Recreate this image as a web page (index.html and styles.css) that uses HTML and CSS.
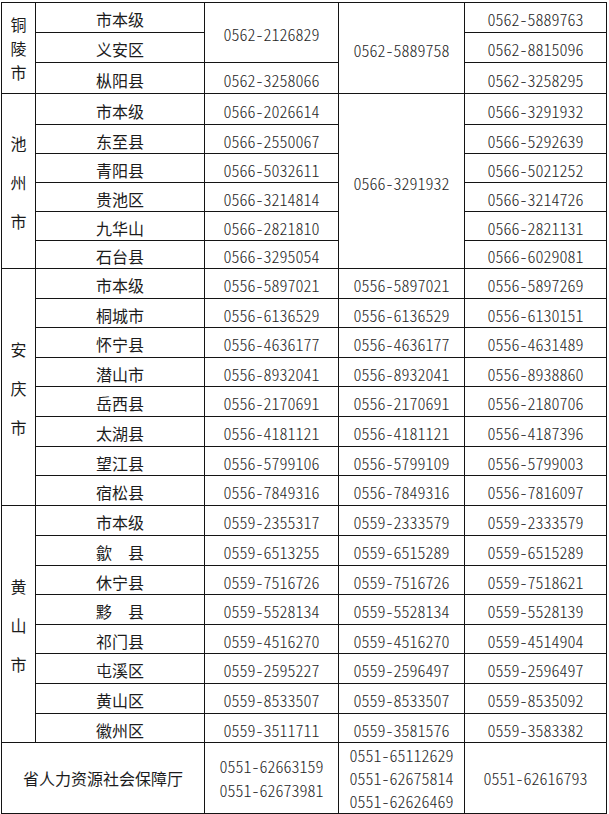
FILE: index.html
```html
<!DOCTYPE html>
<html lang="zh-CN">
<head>
<meta charset="utf-8">
<title>咨询电话</title>
<link rel="stylesheet" href="styles.css">
</head>
<body>
<div class="sheet">
  <!-- 铜陵市 -->
  <div class="c city city-short r3"><span>铜</span><span>陵</span><span>市</span></div>
  <div class="c">市本级</div>
  <div class="c num r2">0562-2126829</div>
  <div class="c num r3">0562-5889758</div>
  <div class="c num">0562-5889763</div>
  <div class="c">义安区</div>
  <div class="c num">0562-8815096</div>
  <div class="c">枞阳县</div>
  <div class="c num">0562-3258066</div>
  <div class="c num">0562-3258295</div>

  <!-- 池州市 -->
  <div class="c city r6"><span>池</span><span>州</span><span>市</span></div>
  <div class="c">市本级</div>
  <div class="c num">0566-2026614</div>
  <div class="c num r6">0566-3291932</div>
  <div class="c num">0566-3291932</div>
  <div class="c">东至县</div>
  <div class="c num">0566-2550067</div>
  <div class="c num">0566-5292639</div>
  <div class="c">青阳县</div>
  <div class="c num">0566-5032611</div>
  <div class="c num">0566-5021252</div>
  <div class="c">贵池区</div>
  <div class="c num">0566-3214814</div>
  <div class="c num">0566-3214726</div>
  <div class="c">九华山</div>
  <div class="c num">0566-2821810</div>
  <div class="c num">0566-2821131</div>
  <div class="c">石台县</div>
  <div class="c num">0566-3295054</div>
  <div class="c num">0566-6029081</div>

  <!-- 安庆市 -->
  <div class="c city r8"><span>安</span><span>庆</span><span>市</span></div>
  <div class="c">市本级</div>
  <div class="c num">0556-5897021</div>
  <div class="c num">0556-5897021</div>
  <div class="c num">0556-5897269</div>
  <div class="c">桐城市</div>
  <div class="c num">0556-6136529</div>
  <div class="c num">0556-6136529</div>
  <div class="c num">0556-6130151</div>
  <div class="c">怀宁县</div>
  <div class="c num">0556-4636177</div>
  <div class="c num">0556-4636177</div>
  <div class="c num">0556-4631489</div>
  <div class="c">潜山市</div>
  <div class="c num">0556-8932041</div>
  <div class="c num">0556-8932041</div>
  <div class="c num">0556-8938860</div>
  <div class="c">岳西县</div>
  <div class="c num">0556-2170691</div>
  <div class="c num">0556-2170691</div>
  <div class="c num">0556-2180706</div>
  <div class="c">太湖县</div>
  <div class="c num">0556-4181121</div>
  <div class="c num">0556-4181121</div>
  <div class="c num">0556-4187396</div>
  <div class="c">望江县</div>
  <div class="c num">0556-5799106</div>
  <div class="c num">0556-5799109</div>
  <div class="c num">0556-5799003</div>
  <div class="c">宿松县</div>
  <div class="c num">0556-7849316</div>
  <div class="c num">0556-7849316</div>
  <div class="c num">0556-7816097</div>

  <!-- 黄山市 -->
  <div class="c city r8"><span>黄</span><span>山</span><span>市</span></div>
  <div class="c">市本级</div>
  <div class="c num">0559-2355317</div>
  <div class="c num">0559-2333579</div>
  <div class="c num">0559-2333579</div>
  <div class="c">歙　县</div>
  <div class="c num">0559-6513255</div>
  <div class="c num">0559-6515289</div>
  <div class="c num">0559-6515289</div>
  <div class="c">休宁县</div>
  <div class="c num">0559-7516726</div>
  <div class="c num">0559-7516726</div>
  <div class="c num">0559-7518621</div>
  <div class="c">黟　县</div>
  <div class="c num">0559-5528134</div>
  <div class="c num">0559-5528134</div>
  <div class="c num">0559-5528139</div>
  <div class="c">祁门县</div>
  <div class="c num">0559-4516270</div>
  <div class="c num">0559-4516270</div>
  <div class="c num">0559-4514904</div>
  <div class="c">屯溪区</div>
  <div class="c num">0559-2595227</div>
  <div class="c num">0559-2596497</div>
  <div class="c num">0559-2596497</div>
  <div class="c">黄山区</div>
  <div class="c num">0559-8533507</div>
  <div class="c num">0559-8533507</div>
  <div class="c num">0559-8535092</div>
  <div class="c">徽州区</div>
  <div class="c num">0559-3511711</div>
  <div class="c num">0559-3581576</div>
  <div class="c num">0559-3583382</div>

  <!-- 省厅 -->
  <div class="c c2 office">省人力资源社会保障厅</div>
  <div class="c num stack two"><span>0551-62663159</span><span>0551-62673981</span></div>
  <div class="c num stack three"><span>0551-65112629</span><span>0551-62675814</span><span>0551-62626469</span></div>
  <div class="c num last">0551-62616793</div>
</div>
</body>
</html>
```

FILE: styles.css
```css
body {
  margin: 0;
  background: #fff;
  font-family: "Noto Sans CJK SC", "Noto Sans", sans-serif;
  color: #1c1c1c;
}

.sheet {
  display: grid;
  grid-template-columns: 33px 168px 133px 125px 141px;
  grid-template-rows:
    29px 29px 30px
    30px 28px 28px 28px 28px 27px
    29px 28px 29px 28px 29px 29px 28px 29px
    29px 29px 28px 29px 28px 29px 29px 28px
    70px;
  gap: 1px;
  padding: 1px;
  background: #141414;
  width: max-content;
  margin: 2px 0 0 1px;
}

.c {
  background: #fff;
  display: flex;
  align-items: center;
  justify-content: center;
  font-size: 16px;
  line-height: 1;
  padding-top: 3px;
  box-sizing: border-box;
  white-space: nowrap;
}

.num {
  font-feature-settings: "hwid" 1;
  font-weight: 300;
  color: #262626;
}

.r2 { grid-row: span 2; }
.r3 { grid-row: span 3; }
.r6 { grid-row: span 6; }
.r8 { grid-row: span 8; }
.c2 { grid-column: span 2; }

.city {
  flex-direction: column;
  gap: 23px;
  padding-top: 1px;
}

.city-short {
  gap: 8px;
  padding-top: 0;
}

.office,
.last {
  padding-top: 0;
}

.stack {
  flex-direction: column;
}

.two {
  gap: 8px;
  padding-top: 0;
}

.three {
  gap: 7px;
  padding-top: 0;
}
```
